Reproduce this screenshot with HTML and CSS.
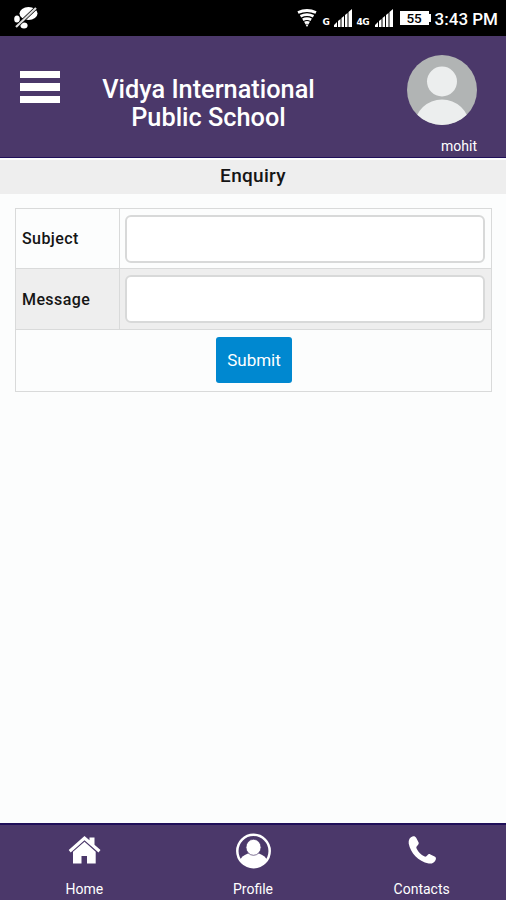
FILE: index.html
```
<!DOCTYPE html>
<html lang="en">
<head>
    <meta charset="UTF-8">
    <title>Vidya International Public School</title>
    <link rel="stylesheet" href="styles.css">
</head>
<body>
    <div class="status-bar">
        <svg class="mute-icon" width="25" height="24" viewBox="0 0 25 24">
            <ellipse cx="14.500" cy="7.500" rx="9" ry="6.500" fill="#fff"/>
            <ellipse cx="3" cy="13" rx="2.800" ry="3.500" fill="#fff"/>
            <ellipse cx="10" cy="19.500" rx="3.600" ry="3" fill="#fff"/>
            <path d="M2 21 22 2" stroke="#000" stroke-width="3.600"/>
            <path d="M2 21 22 2" stroke="#ddd" stroke-width="2.200"/>
        </svg>
        <div class="status-right">
            <svg class="wifi-icon" width="20" height="18" viewBox="0 0 20 18">
                <g fill="none" stroke="#fff" stroke-width="2.800">
                    <path d="M1 3.500Q10-.5 19 3.500"/>
                    <path d="M3.500 7.200Q10 4 16.500 7.200"/>
                    <path d="M5.800 10.700Q10 8.500 14.200 10.700"/>
                    <path d="M7.800 14Q10 12.600 12.200 14"/>
                </g>
                <path d="M8.500 15.500h3L10 18z" fill="#fff"/>
            </svg>
            <span class="net net-g">G</span>
            <svg class="signal" width="18" height="18" viewBox="0 0 18 18" fill="#fff">
                <path d="M0 18v-2l3-3v5zM4 18v-6l2.500-2v8zM7.500 18V9L10 7v11zM11 18V6l2.500-2v14zM14.500 18V3L18 0v18z"/>
            </svg>
            <span class="net net-4g">4G</span>
            <svg class="signal" width="18" height="18" viewBox="0 0 18 18" fill="#fff">
                <path d="M0 18v-2l3-3v5zM4 18v-6l2.500-2v8zM7.500 18V9L10 7v11zM11 18V6l2.500-2v14zM14.500 18V3L18 0v18z"/>
            </svg>
            <span class="battery">55</span>
            <span class="clock">3:43 PM</span>
        </div>
    </div>

    <header class="header">
        <div class="menu-button">
            <span></span>
            <span></span>
            <span></span>
        </div>
        <h1>Vidya International<br>Public School</h1>
        <div class="user">
            <svg width="70" height="70" viewBox="0 0 70 70">
                <clipPath id="avatar"><circle cx="35" cy="35" r="35"/></clipPath>
                <g clip-path="url(#avatar)">
                    <path d="M0 0h70v70H0z" fill="#b1b4b4"/>
                    <circle cx="35" cy="26.500" r="15" fill="#eceeee"/>
                    <ellipse cx="35" cy="70" rx="27" ry="25.500" fill="#eceeee"/>
                </g>
            </svg>
            <div class="user-name">mohit</div>
        </div>
    </header>

    <h2 class="page-title">Enquiry</h2>

    <main class="content">
        <table class="form-table">
            <tr>
                <th><label for="subject">Subject</label></th>
                <td><input type="text" id="subject"></td>
            </tr>
            <tr class="striped">
                <th><label for="message">Message</label></th>
                <td><input type="text" id="message"></td>
            </tr>
            <tr class="submit-row">
                <td colspan="2"><button type="button">Submit</button></td>
            </tr>
        </table>
    </main>

    <nav class="bottom-nav">
        <div class="nav-item">
            <svg width="36" height="36" viewBox="0 0 36 36" fill="#fff">
                <path d="M2.700 17 18.500 3 23.500 7.300V4.500h5v7.200l6 5.300-2 2.400L18.500 7.200 4.700 19.400z"/>
                <path d="M18.500 8.800 7 18.800V30.500h8.500v-7.500h5.500v7.500h8.700V18.800z"/>
            </svg>
            <span>Home</span>
        </div>
        <div class="nav-item">
            <svg width="36" height="36" viewBox="0 0 36 36">
                <clipPath id="profile"><circle cx="18.500" cy="18" r="16"/></clipPath>
                <circle cx="18.500" cy="18" r="16.200" fill="none" stroke="#fff" stroke-width="2.500"/>
                <g clip-path="url(#profile)" fill="#fff">
                    <path d="M5 36V27.500Q6 23 13 20.500H24Q31 23 32 27.500V36z"/>
                    <ellipse cx="18.500" cy="14.300" rx="7.500" ry="8" stroke="#4b386a" stroke-width=".7"/>
                </g>
            </svg>
            <span>Profile</span>
        </div>
        <div class="nav-item">
            <svg width="36" height="36" viewBox="0 0 36 36" fill="#fff">
                <path d="M9 3.200C10.500 3 11.500 3.500 12.300 5L14.500 9.300C15 10.500 14.700 11.300 13.700 12.200C12.300 13.500 12 14.300 12.700 15.700C14.500 19.200 17 21.700 20.200 23.300C21.500 24 22.300 23.600 23.400 22.200C24.300 21 25.200 20.800 26.400 21.400L30.600 23.500C31.900 24.200 32.200 25 31.800 26.400C30.900 29.400 28 31 24.700 30.500C14.200 28.500 6.500 20 4.700 10.500C4.300 6.700 5.800 4 9 3.200z"/>
            </svg>
            <span>Contacts</span>
        </div>
    </nav>
</body>
</html>
```
FILE: styles.css
```
:root {
    --primary-color: #4b386a;
    --primary-dark: #20105a;
    --button-color: #0088d0;
    --border-color: #d9dada;
    --stripe-color: #eeeeee;
}

* {
    margin: 0;
    padding: 0;
    box-sizing: border-box;
}

body {
    font-family: Roboto, "Liberation Sans", sans-serif;
    background-color: #fcfdfd;
    color: #151515;
    height: 100vh;
    display: flex;
    flex-direction: column;
    overflow: hidden;
}

svg {
    display: block;
    flex-shrink: 0;
}

/* Status bar */
.status-bar {
    height: 36px;
    flex-shrink: 0;
    background: #000;
    color: #fff;
    display: flex;
    justify-content: space-between;
    padding: 0 8px 0 14px;
}

.mute-icon {
    margin-top: 6px;
}

.status-right {
    display: flex;
    align-items: flex-start;
}

.wifi-icon {
    margin: 9px 6px 0 0;
}

.net {
    font-family: "DejaVu Sans", sans-serif;
    font-size: 9px;
    font-weight: 700;
    line-height: 10px;
    letter-spacing: -0.5px;
    margin-top: 17px;
}

.net-g {
    width: 11px;
}

.net-4g {
    width: 18px;
}

.signal {
    margin: 9px 5px 0 0;
}

.net-4g + .signal {
    margin-right: 7px;
}

.battery {
    width: 29px;
    height: 14px;
    margin: 11px 6px 0 0;
    background: #fff;
    color: #000;
    font-size: 13.5px;
    font-weight: 500;
    line-height: 15px;
    text-align: center;
    position: relative;
}

.battery::after {
    content: '';
    position: absolute;
    right: -2px;
    top: 3px;
    width: 2px;
    height: 8px;
    background: #fff;
}

.clock {
    font-size: 17px;
    font-weight: 500;
    line-height: 20px;
    margin-top: 9px;
    white-space: nowrap;
}

/* Header */
.header {
    height: 122px;
    flex-shrink: 0;
    background: var(--primary-color);
    border-bottom: 1px solid var(--primary-dark);
    color: #fff;
    display: grid;
    grid-template-columns: 60px 1fr 70px;
    padding: 0 29px 0 20px;
}

.menu-button {
    width: 40px;
    padding-top: 34.5px;
    display: flex;
    flex-direction: column;
    gap: 5px;
}

.menu-button span {
    height: 7.5px;
    background: #fff;
}

.header h1 {
    font-size: 25.3px;
    font-weight: 500;
    line-height: 27.5px;
    text-align: center;
    padding: 40px 70px 0 0;
    white-space: nowrap;
}

.user {
    padding-top: 19px;
}

.user-name {
    font-size: 14px;
    line-height: 18px;
    text-align: right;
    margin-top: 12px;
}

.page-title {
    height: 34px;
    flex-shrink: 0;
    margin-top: 2px;
    background: var(--stripe-color);
    font-size: 19px;
    font-weight: 500;
    line-height: 32px;
    letter-spacing: 0.3px;
    text-align: center;
}

/* Form */
.content {
    flex: 1;
    padding: 14px 14px 0 15px;
}

.form-table {
    width: 477px;
    table-layout: fixed;
    border-collapse: collapse;
    border: 1px solid var(--border-color);
}

.form-table tr {
    height: 60px;
}

.form-table .striped {
    height: 61px;
    background: var(--stripe-color);
}

.form-table .submit-row {
    height: 62px;
}

.form-table th {
    width: 104px;
    border: 1px solid var(--border-color);
    padding-left: 6px;
    font-size: 16px;
    font-weight: 500;
    letter-spacing: 0.4px;
    text-align: left;
}

.form-table td {
    border: 1px solid var(--border-color);
    padding: 0 6px 0 5px;
    vertical-align: middle;
}

.form-table input {
    display: block;
    width: 100%;
    height: 48px;
    border: 2px solid #d8d9d9;
    border-radius: 6px;
    background: #fff;
    padding: 0 8px;
    font: inherit;
}

.form-table .submit-row td {
    padding: 0 5px 1px 6px;
    text-align: center;
}

.form-table button {
    display: block;
    margin: 0 auto;
    width: 76px;
    height: 46px;
    background: var(--button-color);
    color: #fff;
    border: none;
    border-radius: 3px;
    font-family: inherit;
    font-size: 17px;
}

/* Bottom navigation */
.bottom-nav {
    height: 77px;
    flex-shrink: 0;
    background: var(--primary-color);
    border-top: 2px solid var(--primary-dark);
    color: #fff;
    display: grid;
    grid-template-columns: repeat(3, 1fr);
}

.nav-item {
    display: flex;
    flex-direction: column;
    align-items: center;
    padding-top: 8px;
    font-size: 14px;
    line-height: 18px;
    gap: 11px;
}
```
